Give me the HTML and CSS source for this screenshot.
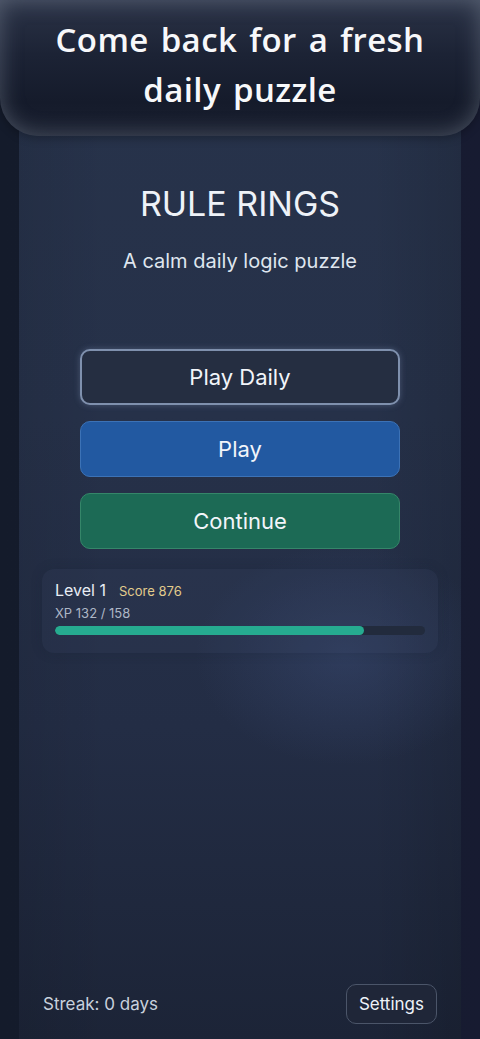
FILE: index.html
```html
<!DOCTYPE html>
<html lang="en">
<head>
<meta charset="utf-8">
<title>Rule Rings</title>
<link rel="stylesheet" href="styles.css">
</head>
<body>
<div class="screen">
  <main class="column">
    <section class="hero">
      <h1 class="title">RULE RINGS</h1>
      <p class="subtitle">A calm daily logic puzzle</p>
    </section>
    <nav class="actions">
      <button class="btn btn-daily">Play Daily</button>
      <button class="btn btn-play">Play</button>
      <button class="btn btn-continue">Continue</button>
    </nav>
    <section class="card">
      <div class="card-row">
        <span class="level">Level 1</span>
        <span class="score">Score 876</span>
      </div>
      <div class="xp">XP 132 / 158</div>
      <div class="bar"><div class="bar-fill" style="width:83.5%"></div></div>
    </section>
    <div class="spacer"></div>
    <footer class="footer">
      <span class="streak">Streak: 0 days</span>
      <button class="settings">Settings</button>
    </footer>
  </main>
  <div class="banner">
    <p class="banner-text">Come back for a fresh daily puzzle</p>
  </div>
</div>
</body>
</html>
```
FILE: styles.css
```css
* { box-sizing: border-box; }
html, body { margin: 0; padding: 0; }
body {
  background: linear-gradient(90deg, #141b2b 0%, #151c2e 50%, #171b31 100%);
  font-family: Inter, "Noto Sans", sans-serif;
  color: #e8edf5;
  width: 480px;
  height: 1039px;
  overflow: hidden;
}
.screen {
  position: relative;
  width: 480px;
  height: 1039px;
}
.column {
  width: 442px;
  height: 1039px;
  margin: 0 auto;
  display: flex;
  flex-direction: column;
  padding: 185px 23px 15px;
  background:
    radial-gradient(ellipse 150px 110px at 326px 655px, rgba(70,90,140,0.32), rgba(70,90,140,0) 100%),
    linear-gradient(90deg, rgba(0,0,0,0.08) 0%, rgba(0,0,0,0) 20%, rgba(0,0,0,0) 80%, rgba(0,0,0,0.12) 100%),
    linear-gradient(180deg, #27334b 0%, #263149 40%, #232d45 70%, #1c2437 100%);
}
.hero { text-align: center; }
.title {
  margin: 0;
  font-size: 34px;
  font-weight: 400;
  line-height: 38px;
  color: #eef2f8;
}
.subtitle {
  margin: 26px 0 0;
  font-size: 20px;
  line-height: 24px;
  color: #dfe6ef;
}
.actions {
  margin: 76px 38px 0;
  display: flex;
  flex-direction: column;
  gap: 16px;
}
.btn {
  height: 56px;
  border-radius: 10px;
  font-family: Inter, "Noto Sans", sans-serif;
  font-size: 22px;
  color: #f2f5fa;
  border: 1px solid;
  padding: 0;
}
.btn-daily {
  background: #252e41;
  border: 2px solid #7f90ad;
  box-shadow: 0 0 6px rgba(140,160,200,0.35);
}
.btn-play {
  background: #2259a1;
  border-color: #3c72b6;
}
.btn-continue {
  background: #1c6a55;
  border-color: #358669;
}
.card {
  margin: 20px 0 0;
  padding: 11px 13px 18px;
  border-radius: 12px;
  background: rgba(60,75,105,0.16);
  box-shadow: 0 0 12px rgba(20,28,45,0.2);
}
.card-row {
  display: flex;
  align-items: baseline;
  gap: 13px;
}
.level { font-size: 16px; color: #e8edf5; }
.score { font-size: 13px; color: #e2cc8c; }
.xp {
  margin-top: 5px;
  font-size: 13px;
  color: #aeb7c6;
}
.bar {
  margin-top: 5px;
  height: 9px;
  border-radius: 5px;
  background: #222b3d;
  overflow: hidden;
}
.bar-fill {
  height: 100%;
  border-radius: 5px;
  background: #26ab90;
}
.spacer { flex: 1; }
.footer {
  display: flex;
  align-items: center;
  justify-content: space-between;
  padding-left: 1px;
  margin-right: 1px;
}
.streak {
  font-size: 17px;
  color: #c9d1dd;
}
.settings {
  height: 40px;
  padding: 0 12px;
  border-radius: 10px;
  border: 1px solid #4b5569;
  background: #1f2638;
  color: #eef2f8;
  font-family: Inter, "Noto Sans", sans-serif;
  font-size: 17px;
}
.banner {
  position: absolute;
  top: 0;
  left: 0;
  right: 0;
  height: 136px;
  border-radius: 0 0 38px 38px;
  background: linear-gradient(180deg, #2b3347 0%, #1c2335 40%, #151b2b 75%, #1a2030 100%);
  box-shadow: inset 0 0 22px rgba(170,180,195,0.35), 0 3px 8px rgba(0,0,0,0.25);
  display: flex;
  align-items: center;
  justify-content: center;
  padding: 0 40px 6px;
}
.banner-text {
  margin: 0;
  text-align: center;
  font-family: "Open Sans", "DejaVu Sans", sans-serif;
  font-weight: 600;
  font-size: 33px;
  line-height: 50px;
  letter-spacing: 0.4px;
  word-spacing: 3px;
  color: #f7f8fa;
}
```
